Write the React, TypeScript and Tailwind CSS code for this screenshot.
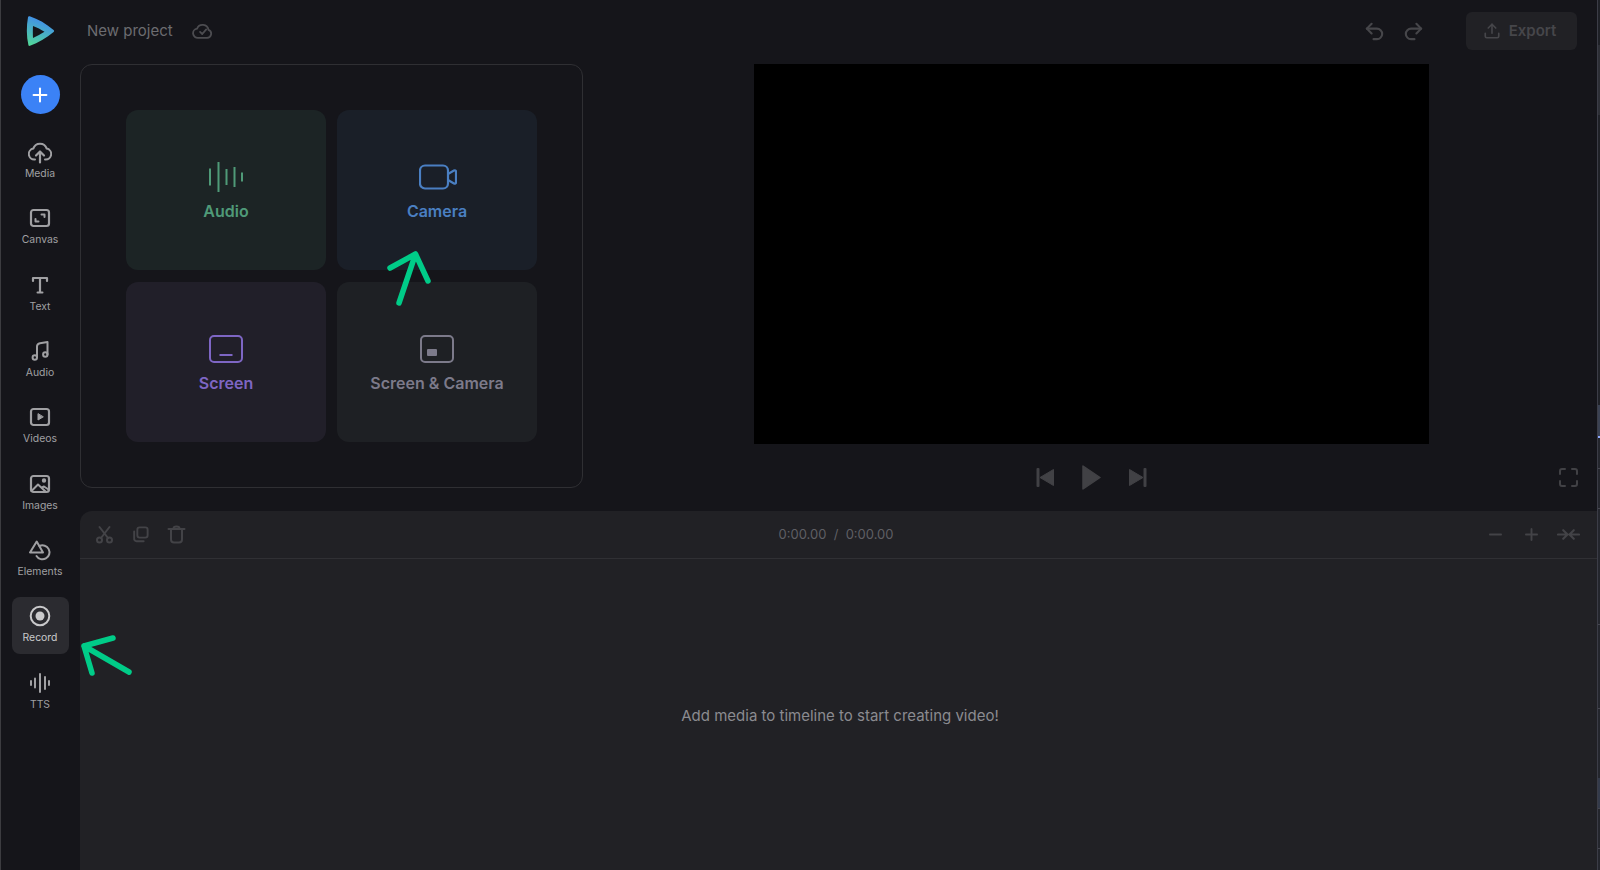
import React from "react";
import { Undo2, Redo2, Upload, Minus, Plus } from "lucide-react";

const S = ({ className = "", children, size = 24, sw = 2, box = "0 0 24 24" }: { className?: string; children: React.ReactNode; size?: number; sw?: number; box?: string }) => (
  <svg width={size} height={size} viewBox={box} fill="none" stroke="currentColor" strokeWidth={sw} strokeLinecap="round" strokeLinejoin="round" className={className}>
    {children}
  </svg>
);

const nav: { label: string; icon: React.ReactNode; active?: boolean }[] = [
  {
    label: "Media",
    icon: (
      <S>
        <path d="M7 19.500H6.500A5.500 5.500 0 0 1 5.300 8.600A7 7 0 0 1 18.700 8.600A5.500 5.500 0 0 1 17.500 19.500H17" />
        <path d="M12 22.500V11.500M8 15.500L12 11.500L16 15.500" strokeWidth={2.2} />
      </S>
    ),
  },
  {
    label: "Canvas",
    icon: (
      <S>
        <rect x="3" y="4" width="18" height="16" rx="2.5" strokeWidth={2.2} />
        <path d="M13.500 8.500H16.500V11" />
        <path d="M10.500 15.500H7.500V13" />
      </S>
    ),
  },
  {
    label: "Text",
    icon: (
      <S>
        <path d="M5 8V5H19V8" strokeWidth={2.2} />
        <path d="M12 5V19" strokeWidth={2.2} />
        <path d="M9.500 19.500H14.500" />
      </S>
    ),
  },
  {
    label: "Audio",
    icon: (
      <S>
        <path d="M9 18V7.500C9 5.500 10.500 4.500 12 4.200L19.500 3V15.500" />
        <circle cx="6.800" cy="18.500" r="2.200" />
        <circle cx="17.300" cy="15.500" r="2.200" />
      </S>
    ),
  },
  {
    label: "Videos",
    icon: (
      <S>
        <rect x="3" y="4" width="18" height="16" rx="2.5" strokeWidth={2.2} />
        <path d="M10 9V15L15 12Z" fill="currentColor" strokeWidth={1} />
      </S>
    ),
  },
  {
    label: "Images",
    icon: (
      <S>
        <rect x="3" y="4" width="18" height="16" rx="2.5" strokeWidth={2.2} />
        <path d="M3.500 19L10 12.500L17.500 19.500" />
        <path d="M14 15.500L16 14.500L20.500 17.500" />
        <circle cx="16" cy="8.500" r="1.200" fill="currentColor" />
      </S>
    ),
  },
  {
    label: "Elements",
    icon: (
      <S>
        <path d="M8.700 3.500L2 14.500H15Z" />
        <path d="M11.500 8.000A7 7 0 1 1 8.500 18" />
      </S>
    ),
  },
  {
    label: "Record",
    active: true,
    icon: (
      <S>
        <circle cx="12" cy="12" r="9.300" />
        <circle cx="12" cy="12" r="4.500" fill="currentColor" stroke="none" />
      </S>
    ),
  },
  {
    label: "TTS",
    icon: (
      <S>
        <path d="M3 10V14M7 7.500V16.500M12 3V21M17 6V18M21 10V14" />
      </S>
    ),
  },
];

const strip: { h: number; c: string }[] = [
  { h: 45, c: "bg-[#1f2127]" },
  { h: 70, c: "bg-[#2d2f36]" },
  { h: 290, c: "bg-[#1f2127]" },
  { h: 31, c: "bg-[#3a4152]" },
  { h: 2, c: "bg-[#8ea8ff]" },
  { h: 30, c: "bg-[#24262d]" },
  { h: 1, c: "bg-[#45464f]" },
  { h: 39, c: "bg-[#24262d]" },
  { h: 1, c: "bg-[#45464f]" },
  { h: 115, c: "bg-[#24262d]" },
  { h: 1, c: "bg-[#45464f]" },
  { h: 83, c: "bg-[#24262d]" },
  { h: 1, c: "bg-[#45464f]" },
  { h: 69, c: "bg-[#24262d]" },
  { h: 30, c: "bg-[#333a4a]" },
  { h: 1, c: "bg-[#45464f]" },
  { h: 39, c: "bg-[#24262d]" },
  { h: 1, c: "bg-[#45464f]" },
  { h: 21, c: "bg-[#24262d]" },
];

function Card({ bg, color, label, icon }: { bg: string; color: string; label: string; icon: React.ReactNode }) {
  return (
    <div className={`flex h-[160px] w-[200px] flex-col items-center justify-start rounded-[12px] pt-[50px] ${bg}`} style={{ color }}>
      <div className="flex h-[34px] items-center justify-center">{icon}</div>
      <span className="mt-[5px] text-[16px] font-semibold leading-[24px]">{label}</span>
    </div>
  );
}

export default function App() {
  return (
    <div className="flex h-[870px] w-[1600px] overflow-hidden bg-[#15151a] font-['Inter',sans-serif]">
      <div className="w-[1px] shrink-0 bg-[#3c3c40]" />
      <aside className="flex w-[79px] shrink-0 flex-col items-center pr-[1px]">
        <div className="flex h-[64px] w-full items-center pb-[2px] pl-[25px]">
          <svg width="30" height="32" viewBox="0 0 30 32">
            <defs>
              <linearGradient id="lg" x1="0.500" y1="0" x2="0.150" y2="1">
                <stop offset="0" stopColor="#4089f0" />
                <stop offset="1" stopColor="#52d898" />
              </linearGradient>
            </defs>
            <path
              fillRule="evenodd"
              fill="url(#lg)"
              d="M2 2.200 C2.100 1.300 2.900 1 3.700 1.300 C12 4 20.500 9 27.600 15 C28.300 15.600 28.300 16.500 27.600 17 C20.500 23 12 28 4 30.800 C3.200 31.100 2.500 30.800 2.400 30 C0.400 21 0.400 11 2 2.200 Z M7 11 C6.800 14.500 6.800 19 7 23 C11 21 15 19 18.500 16.800 C15 14.500 11 12.500 7 11 Z"
            />
          </svg>
        </div>
        <button className="mt-[11px] flex h-[39px] w-[39px] shrink-0 items-center justify-center rounded-full bg-[#3b82f6] text-white">
          <Plus size={22} strokeWidth={2.2} />
        </button>
        <nav className="mt-[19px] flex flex-col items-center gap-[9.33px]">
          {nav.map((n) => (
            <div key={n.label} className={`flex h-[57px] w-[57px] flex-col items-center rounded-[8px] pt-[7px] ${n.active ? "bg-[#2b2b30] text-[#c9c9cb]" : "text-[#a0a0a3]"}`}>
              <div className="flex h-[24px] w-[24px] items-center justify-center">{n.icon}</div>
              <span className="mt-[2px] text-[10.400px] leading-[16px]">{n.label}</span>
            </div>
          ))}
        </nav>
      </aside>

      <main className="flex min-w-0 flex-1 flex-col">
        <header className="flex h-[64px] shrink-0 items-center pb-[2px]">
          <span className="ml-[7px] text-[15px] leading-[24px] text-[#6c6c70]">New project</span>
          <span className="ml-[19px] text-[#4c4c50]">
            <S size={22}>
              <path d="M7 19.500H16.500A4.500 4.500 0 0 0 18 10.800A6.500 6.500 0 0 0 5.500 9.500A5 5 0 0 0 7 19.500Z" />
              <path d="M8.800 13L11.200 15.300L15.500 10.300" />
            </S>
          </span>
          <div className="ml-auto flex items-center text-[#46464a]">
            <Undo2 size={23} strokeWidth={2.2} />
            <Redo2 size={23} strokeWidth={2.2} className="ml-[16px]" />
            <button className="ml-[41px] mr-[20px] flex h-[38px] w-[111px] items-center justify-center gap-[8px] rounded-[6px] bg-[#212125] pr-[4px] text-[15px] font-semibold">
              <Upload size={18} strokeWidth={2.2} />
              Export
            </button>
          </div>
        </header>

        <div className="flex h-[447px] shrink-0">
          <section className="h-[424px] w-[503px] shrink-0 rounded-[12px] border border-[#2f2f33] px-[45px] py-[45px]">
            <div className="grid grid-cols-[200px_200px] gap-x-[11px] gap-y-[12px]">
              <Card
                bg="bg-[#1c2425]"
                color="#4f9a78"
                label="Audio"
                icon={
                  <S size={34} box="0 0 34 34">
                    <path d="M1 8.500V25.500M9.500 2V32M17.500 9V25M25.500 7V27M33 12.500V21.500" strokeLinecap="butt" />
                  </S>
                }
              />
              <Card
                bg="bg-[#1a1f28]"
                color="#4a7fc2"
                label="Camera"
                icon={
                  <svg width="38" height="26" viewBox="0 0 38 26" fill="none" stroke="currentColor" strokeWidth="2.200" strokeLinejoin="round" className="ml-[1px]">
                    <rect x="1" y="1.500" width="28" height="23" rx="5" />
                    <path d="M29 10L35 6.500C36 6 37 6.500 37 7.500V18.500C37 19.500 36 20 35 19.500L29 16" />
                  </svg>
                }
              />
              <Card
                bg="bg-[#211f29]"
                color="#7e66c4"
                label="Screen"
                icon={
                  <svg width="34" height="28" viewBox="0 0 34 28" fill="none" stroke="currentColor" strokeWidth="2">
                    <rect x="1" y="1" width="32" height="26" rx="4" />
                    <path d="M10.500 20H23.500" />
                  </svg>
                }
              />
              <Card
                bg="bg-[#1e2024]"
                color="#7c7a8a"
                label="Screen & Camera"
                icon={
                  <svg width="34" height="28" viewBox="0 0 34 28" fill="none" stroke="currentColor" strokeWidth="2">
                    <rect x="1" y="1" width="32" height="26" rx="4" />
                    <rect x="7" y="14" width="10" height="7" rx="1" fill="currentColor" stroke="none" />
                  </svg>
                }
              />
            </div>
          </section>

          <div className="flex min-w-0 flex-1 flex-col items-center pl-[3px]">
            <div className="h-[380px] w-[675px] shrink-0 bg-black" />
            <div className="mt-[21px] grid w-full grid-cols-[1fr_auto_1fr] items-center px-[19px] text-[#414145]">
              <div />
              <div className="flex items-center gap-[28px]">
                <svg width="18" height="19" viewBox="0 0 18 19" fill="currentColor">
                  <rect x="0.500" y="0" width="3" height="19" rx="1" />
                  <path d="M17.500 1.500V17.500L4 9.500Z" stroke="currentColor" strokeLinejoin="round" />
                </svg>
                <svg width="19" height="25" viewBox="0 0 19 25" fill="currentColor">
                  <path d="M1 1V24L18 12.500Z" stroke="currentColor" strokeWidth="1.500" strokeLinejoin="round" />
                </svg>
                <svg width="18" height="19" viewBox="0 0 18 19" fill="currentColor">
                  <rect x="14.500" y="0" width="3" height="19" rx="1" />
                  <path d="M0.500 1.500V17.500L14 9.500Z" stroke="currentColor" strokeLinejoin="round" />
                </svg>
              </div>
              <div className="justify-self-end">
                <svg width="19" height="19" viewBox="0 0 19 19" fill="none" stroke="currentColor" strokeWidth="2" strokeLinecap="round">
                  <path d="M1 6V3A2 2 0 0 1 3 1H6M13 1H16A2 2 0 0 1 18 3V6M18 13V16A2 2 0 0 1 16 18H13M6 18H3A2 2 0 0 1 1 16V13" />
                </svg>
              </div>
            </div>
          </div>
        </div>

        <section className="flex min-h-0 flex-1 flex-col rounded-tl-[12px] bg-[#212125]">
          <div className="relative flex h-[48px] shrink-0 items-center justify-center border-b border-[#303034] pr-[5px]">
            <div className="absolute left-[15px] flex items-center gap-[17px] text-[#434347]">
              <S size={19} box="0 0 19 19" sw={2}>
                <circle cx="4.500" cy="15" r="2.500" />
                <circle cx="14.500" cy="15" r="2.500" />
                <path d="M6 13L14.500 2M13 13L4.500 2" />
              </S>
              <S size={19} sw={2.400}>
                <rect x="8" y="3" width="13" height="13" rx="3" />
                <path d="M4 8V17A3 3 0 0 0 7 20.500H16" />
              </S>
              <S size={19} box="0 0 19 19" sw={2}>
                <path d="M1.500 4H17.500M6.500 3.500C6.500 2 7.500 1.500 9.500 1.500C11.500 1.500 12.500 2 12.500 3.500" />
                <path d="M4 4.500V14.500A3 3 0 0 0 7 17.500H12A3 3 0 0 0 15 14.500V4.500" />
              </S>
            </div>
            <span className="whitespace-pre text-[13px] text-[#5f5f64]">0:00.00  /  0:00.00</span>
            <div className="absolute right-[19px] flex items-center text-[#434347]">
              <Minus size={19} strokeWidth={2.400} />
              <Plus size={19} strokeWidth={2.400} className="ml-[17px]" />
              <S size={23} sw={2.200} className="ml-[16px] -mr-[2px]">
                <path d="M1 12H10M6.500 7.500L11 12L6.500 16.500M23 12H14M17.500 7.500L13 12L17.500 16.500" />
              </S>
            </div>
          </div>
          <div className="flex flex-1 items-center justify-center pl-[3px] pt-[2px]">
            <span className="text-[15px] leading-[24px] text-[#8b8b90]">Add media to timeline to start creating video!</span>
          </div>
        </section>
      </main>

      <div className="flex w-[3px] shrink-0 flex-col border-l border-[#3c3d47]">
        {strip.map((s, i) => (
          <div key={i} className={`shrink-0 ${s.c}`} style={{ height: s.h }} />
        ))}
      </div>

      <svg className="pointer-events-none absolute left-0 top-0" width="1600" height="870" fill="none" stroke="#00cc88" strokeWidth="5.500" strokeLinecap="round" strokeLinejoin="round">
        <path d="M399 303L415.500 254M390 268L415.500 254L428 281" />
        <path d="M129 672L84 646M113 638L84 646L92 673" />
      </svg>
    </div>
  );
}
